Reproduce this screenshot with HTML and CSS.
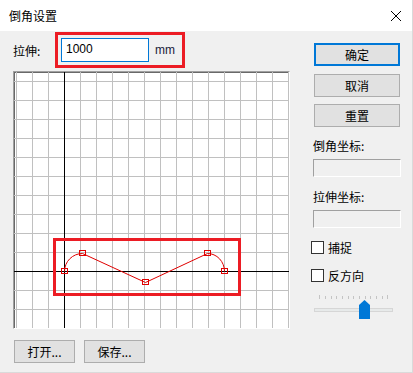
FILE: index.html
```html
<!DOCTYPE html>
<html lang="zh-CN">
<head>
    <meta charset="UTF-8">
    <title>倒角设置</title>
    <link rel="stylesheet" href="styles.css">
</head>
<body>
    <div class="window">
        <div class="titlebar">
            <span class="title">倒角设置</span>
            <svg class="close" width="12" height="12" viewBox="0 0 12 12">
                <path d="M1 1 L11 11 M11 1 L1 11" stroke="#000" stroke-width="1" fill="none"/>
            </svg>
        </div>

        <div class="content">
            <div class="left">
                <div class="top-row">
                    <span class="label">拉伸:</span>
                    <div class="highlight">
                        <div class="text-input">1000</div>
                        <span class="unit">mm</span>
                    </div>
                </div>

                <div class="canvas">
                    <svg id="grid" width="275" height="256"></svg>
                </div>

                <div class="bottom-buttons">
                    <button class="btn small">打开...</button>
                    <button class="btn small">保存...</button>
                </div>
            </div>

            <div class="right">
                <button class="btn default">确定</button>
                <button class="btn gap8">取消</button>
                <button class="btn gap7">重置</button>

                <div class="field-label first">倒角坐标:</div>
                <div class="readonly"></div>
                <div class="field-label">拉伸坐标:</div>
                <div class="readonly"></div>

                <label class="check first-check"><span class="box"></span>捕捉</label>
                <label class="check"><span class="box"></span>反方向</label>

                <svg class="slider" width="82" height="25" viewBox="0 0 82 25">
                    <g id="ticks"></g>
                    <rect x="1.5" y="13.5" width="78" height="3" fill="#e7eaea" stroke="#d6d6d6"/>
                    <polygon points="46,10 51.5,5 57,10 57,24 46,24" fill="#0078d7"/>
                </svg>
            </div>
        </div>
    </div>

    <script>
        const ns = 'http://www.w3.org/2000/svg';
        const grid = document.getElementById('grid');

        function line(parent, x1, y1, x2, y2, color) {
            const l = document.createElementNS(ns, 'line');
            l.setAttribute('x1', x1);
            l.setAttribute('y1', y1);
            l.setAttribute('x2', x2);
            l.setAttribute('y2', y2);
            l.setAttribute('stroke', color);
            l.setAttribute('stroke-width', 1);
            parent.appendChild(l);
        }

        // grid: 16px columns, ~19px rows
        for (let k = 0; k < 18; k++) {
            const x = 2 + 16 * k + 0.5;
            line(grid, x, 0, x, 256, '#c0c0c0');
        }
        for (let k = 0; k < 13; k++) {
            const y = Math.round(9 + 19.03 * k) + 0.5;
            line(grid, 0, y, 275, y, '#c0c0c0');
        }
        // axes
        line(grid, 50.5, 0, 50.5, 256, '#000');
        line(grid, 0, 199.5, 275, 199.5, '#000');

        // profile curve
        const path = document.createElementNS(ns, 'path');
        path.setAttribute('d', 'M50.5,199.5 A18,18 0 0 1 68.5,181.5 L131.5,210.5 L193.5,181.5 A17,18 0 0 1 210.5,199.5');
        path.setAttribute('fill', 'none');
        path.setAttribute('stroke', '#e00000');
        grid.appendChild(path);

        [[50, 199], [68, 181], [131, 210], [193, 181], [210, 199]].forEach(p => {
            const r = document.createElementNS(ns, 'rect');
            r.setAttribute('x', p[0] - 2.5);
            r.setAttribute('y', p[1] - 2.5);
            r.setAttribute('width', 6);
            r.setAttribute('height', 5);
            r.setAttribute('fill', 'none');
            r.setAttribute('stroke', '#e00000');
            grid.appendChild(r);
        });

        // highlight frame round the curve
        const hl = document.createElementNS(ns, 'rect');
        hl.setAttribute('x', 40.5);
        hl.setAttribute('y', 167.5);
        hl.setAttribute('width', 185);
        hl.setAttribute('height', 55);
        hl.setAttribute('fill', 'none');
        hl.setAttribute('stroke', '#ec1c24');
        hl.setAttribute('stroke-width', 3);
        grid.appendChild(hl);

        // slider ticks
        const ticks = document.getElementById('ticks');
        for (let k = 0; k < 13; k++) {
            const x = Math.round(6.3 + 5.667 * k) + 0.5;
            const top = (k === 0 || k === 12) ? 0 : 1;
            line(ticks, x, top, x, 4, '#c4c4c4');
        }
    </script>
</body>
</html>
```

FILE: styles.css
```css
body {
    margin: 0;
    padding: 0;
    font-family: "Noto Sans CJK SC", "Liberation Sans", sans-serif;
    font-size: 12px;
    color: #000;
}
.window {
    width: 413px;
    height: 373px;
    box-sizing: border-box;
    background-color: #f0f0f0;
    border-right: 1px solid #dadada;
    border-bottom: 1px solid #dadada;
}
.titlebar {
    height: 31px;
    background-color: #fff;
    display: flex;
    align-items: center;
    justify-content: space-between;
    padding: 0 10px 0 9px;
}
.title {
    line-height: 16px;
}
.content {
    display: flex;
}
.left {
    padding-left: 13px;
    width: 277px;
}
.top-row {
    display: flex;
    align-items: center;
    height: 36px;
    margin-top: 1px;
}
.label {
    width: 42px;
}
.highlight {
    box-sizing: border-box;
    width: 130px;
    height: 36px;
    border: 3px solid #ec1c24;
    padding: 3px;
    display: flex;
    align-items: center;
}
.text-input {
    box-sizing: border-box;
    width: 88px;
    height: 24px;
    border: 1px solid #0078d7;
    background-color: #fff;
    padding-left: 4px;
    line-height: 21px;
    font-family: "Liberation Sans", sans-serif;
    font-size: 12px;
}
.unit {
    margin-left: 6px;
    font-family: "Liberation Sans", sans-serif;
    color: #1a1a3a;
}
.canvas {
    margin-top: 3px;
    width: 275px;
    height: 256px;
    border: 1px solid;
    border-color: #a0a0a0 #fff #fff #a0a0a0;
    box-shadow: inset 1px 1px #696969;
    background-color: #fff;
}
.canvas svg {
    display: block;
}
.bottom-buttons {
    display: flex;
    gap: 9px;
    margin-top: 11px;
    margin-left: 1px;
}
.btn {
    box-sizing: border-box;
    width: 86px;
    height: 23px;
    background-color: #e1e1e1;
    border: 1px solid #adadad;
    font-family: "Noto Sans CJK SC", sans-serif;
    font-size: 12px;
    color: #000;
    padding: 0;
    line-height: 20px;
}
.btn.small {
    width: 61px;
}
.right {
    display: flex;
    flex-direction: column;
    align-items: flex-start;
    margin-left: 21px;
    padding-top: 12px;
    width: 90px;
}
.right .btn {
    margin-left: 3px;
}
.btn.default {
    border: 2px solid #0078d7;
}
.gap8 {
    margin-top: 8px;
}
.gap7 {
    margin-top: 7px;
}
.field-label {
    margin-top: 12px;
    margin-left: 2px;
    line-height: 16px;
}
.field-label.first {
    margin-top: 11px;
}
.readonly {
    box-sizing: border-box;
    margin-top: 5px;
    margin-left: 2px;
    width: 88px;
    height: 18px;
    border: 1px solid;
    border-color: #a0a0a0 #fff #fff #a0a0a0;
}
.check {
    display: flex;
    align-items: center;
    gap: 4px;
    height: 16px;
    margin-top: 12px;
}
.check.first-check {
    margin-top: 11px;
}
.box {
    box-sizing: border-box;
    width: 13px;
    height: 13px;
    border: 1px solid #333;
    background-color: #fff;
}
.slider {
    display: block;
    margin-top: 12px;
    margin-left: 2px;
}
```
